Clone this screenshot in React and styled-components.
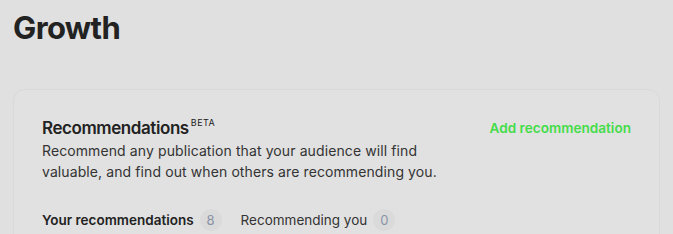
import React from "react";
import styled, { createGlobalStyle } from "styled-components";

const Global = createGlobalStyle`
  html, body { margin: 0; padding: 0; background: #e0e0e0; }
  body { font-family: Inter, "Noto Sans", sans-serif; color: #222; -webkit-font-smoothing: antialiased; }
`;

const Page = styled.div`
  padding: 9px 13px 0 13px;
`;

const Title = styled.h1`
  margin: 0;
  font-size: 31px;
  font-weight: 700;
  letter-spacing: -0.02em;
  line-height: 38px;
  color: #222;
`;

const Card = styled.section`
  margin-top: 42px;
  width: 647px;
  box-sizing: border-box;
  border: 1px solid #d9d9d9;
  border-radius: 12px;
  background: #e1e1e1;
  padding: 26px 28px 20px 28px;
`;

const Header = styled.div`
  display: flex;
  justify-content: space-between;
  align-items: flex-start;
`;

const Heading = styled.h2`
  margin: 0;
  font-size: 17px;
  font-weight: 600;
  letter-spacing: -0.025em;
  line-height: 24px;
  color: #222;
`;

const Sup = styled.sup`
  font-size: 9px;
  font-weight: 400;
  letter-spacing: 0.05em;
  margin-left: 2px;
  vertical-align: 8px;
  line-height: 0;
`;

const Action = styled.a`
  font-size: 13.6px;
  font-weight: 600;
  color: #45dc4a;
  line-height: 24px;
  cursor: pointer;
`;

const Desc = styled.p`
  margin: 0;
  width: 420px;
  font-size: 14px;
  letter-spacing: 0.1px;
  line-height: 21px;
  color: #333;
`;

const Tabs = styled.div`
  display: flex;
  align-items: center;
  gap: 19px;
  margin-top: 27px;
`;

const Tab = styled.div`
  display: flex;
  align-items: center;
  gap: 6px;
  font-size: 13.5px;
  font-weight: ${(p) => (p.$active ? 600 : 400)};
  color: ${(p) => (p.$active ? "#222" : "#333")};
`;

const Count = styled.span`
  display: inline-flex;
  align-items: center;
  justify-content: center;
  min-width: 22px;
  height: 22px;
  border-radius: 11px;
  background: #dadada;
  color: #8a93a6;
  font-size: 13px;
  font-weight: 400;
`;

export default function App() {
  return (
    <>
      <Global />
      <Page>
        <Title>Growth</Title>
        <Card>
          <Header>
            <Heading>
              Recommendations<Sup>BETA</Sup>
            </Heading>
            <Action>Add recommendation</Action>
          </Header>
          <Desc>
            Recommend any publication that your audience will find valuable, and
            find out when others are recommending you.
          </Desc>
          <Tabs>
            <Tab $active>
              Your recommendations <Count>8</Count>
            </Tab>
            <Tab>
              Recommending you <Count>0</Count>
            </Tab>
          </Tabs>
        </Card>
      </Page>
    </>
  );
}
